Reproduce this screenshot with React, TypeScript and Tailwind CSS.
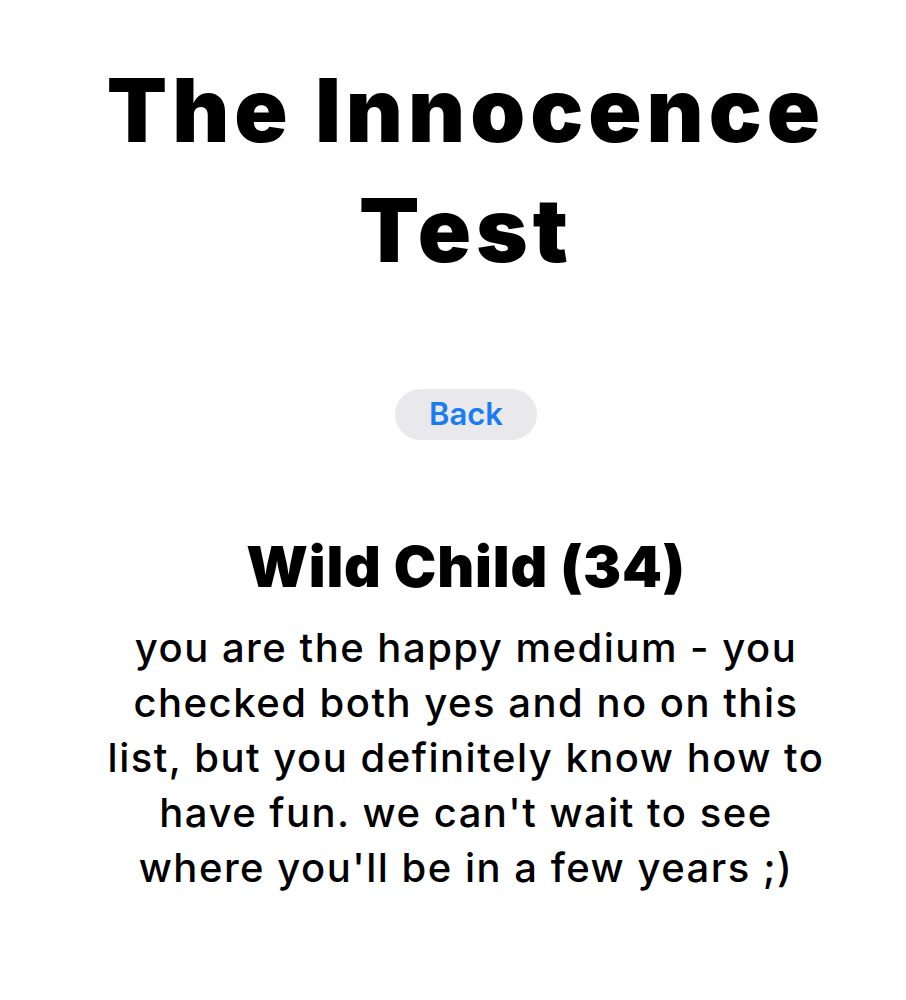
export default function App() {
  const lines = [
    "you are the happy medium - you",
    "checked both yes and no on this",
    "list, but you definitely know how to",
    "have fun. we can't wait to see",
    "where you'll be in a few years ;)",
  ];

  return (
    <div
      className="min-h-screen bg-white text-black flex flex-col items-center pl-[26px]"
      style={{ fontFamily: "Inter, 'Noto Sans', sans-serif" }}
    >
      <h1 className="mt-[50px] text-center text-[88px] leading-[120px] font-black tracking-[5px]">
        The Innocence
        <br />
        Test
      </h1>

      <button className="mt-[99px] h-[51px] w-[142px] rounded-full bg-[#e9e9eb] text-[31px] font-semibold text-[#1a7cf0]">
        Back
      </button>

      <h2 className="mt-[93px] text-center text-[57px] leading-[68px] font-black tracking-[0.8px]">
        Wild Child (34)
      </h2>

      <p className="mt-[19px] text-center text-[40px] leading-[55px] font-medium tracking-[1.5px]">
        {lines.map((l) => (
          <span key={l} className="block whitespace-nowrap">
            {l}
          </span>
        ))}
      </p>
    </div>
  );
}
